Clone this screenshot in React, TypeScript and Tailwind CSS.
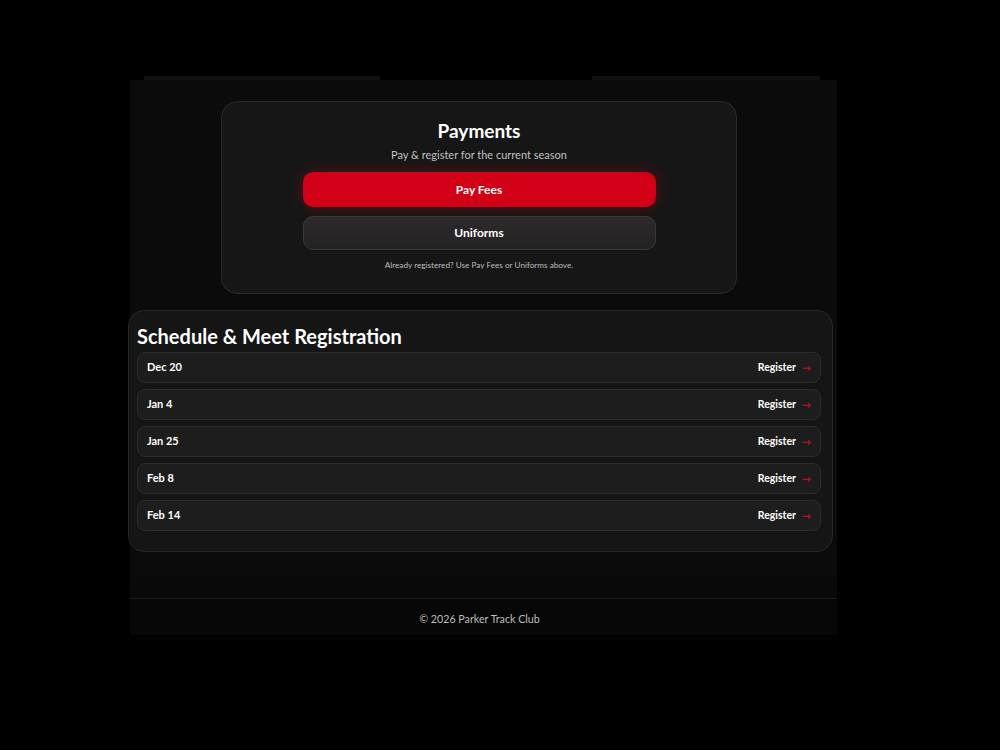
import React from 'react';

const meets = ['Dec 20', 'Jan 4', 'Jan 25', 'Feb 8', 'Feb 14'];

const MeetRow = ({ date }: { date: string }) => (
  <div className="flex h-[31px] items-center justify-between rounded-lg border border-[#2c2c2c] bg-[#1d1d1d] pl-[9px] pr-[9px]">
    <span className="text-[11px] font-bold text-white">{date}</span>
    <a href="#" className="flex items-center gap-[6px] text-[10.5px] font-bold text-white">
      Register
      <span className="text-[9px] text-[#c8101d]">→</span>
    </a>
  </div>
);

const App = () => {
  return (
    <div
      className="min-h-screen bg-black pl-[130px] pt-[75px]"
      style={{ fontFamily: 'Lato, "Open Sans", sans-serif' }}
    >
      {/* strip left over from the header */}
      <div className="flex h-[5px] w-[707px] items-end">
        <div className="ml-[14px] h-[4px] w-[236px] bg-[#0e1215]" />
        <div className="ml-[212px] h-[4px] w-[228px] bg-[#0d0f11]" />
      </div>

      <div className="w-[707px] bg-[#0b0b0b] pt-[21px]">
        {/* Payments */}
        <section className="ml-[91px] w-[516px] rounded-2xl border border-[#2a2a2a] bg-[#161616] pb-[22px] pt-[16px] text-center">
          <h2 className="text-[19px] font-bold leading-[26px] text-white">Payments</h2>
          <p className="mt-[3px] text-[11px] leading-[16px] text-[#c2c2c2]">Pay &amp; register for the current season</p>
          <button className="mx-auto mt-[9px] block h-[35px] w-[353px] rounded-[10px] bg-[#d10016] text-[12px] font-bold text-white shadow-[0_0_16px_rgba(209,0,22,0.35)]">
            Pay Fees
          </button>
          <button className="mx-auto mt-[9px] block h-[34px] w-[353px] rounded-[10px] border border-[#3a3a3a] bg-gradient-to-b from-[#2f2a2b] to-[#222222] text-[12px] font-bold text-white">
            Uniforms
          </button>
          <p className="mt-[9px] text-[8.2px] leading-[12px] text-[#bdbdbd]">
            Already registered? Use Pay Fees or Uniforms above.
          </p>
        </section>

        {/* Schedule */}
        <section className="-ml-[2px] mr-[4px] mt-[16px] rounded-2xl border border-[#262626] bg-[#151515] pb-[20px] pl-[8px] pr-[11px] pt-[13px]">
          <h2 className="text-[20px] font-bold leading-[24px] text-white">Schedule &amp; Meet Registration</h2>
          <div className="mt-[4px] flex flex-col gap-[6px]">
            {meets.map((d) => (
              <MeetRow key={d} date={d} />
            ))}
          </div>
        </section>

        <div className="h-[46px] bg-gradient-to-b from-[#0b0b0b] to-[#090909]" />

        <footer className="flex h-[37px] items-center justify-center border-t border-[#1c1c1c] bg-[#070707] pr-[8px] pt-[4px] text-[10.7px] text-[#bdbdbd]">
          © 2026 Parker Track Club
        </footer>
      </div>
    </div>
  );
};

export default App;
